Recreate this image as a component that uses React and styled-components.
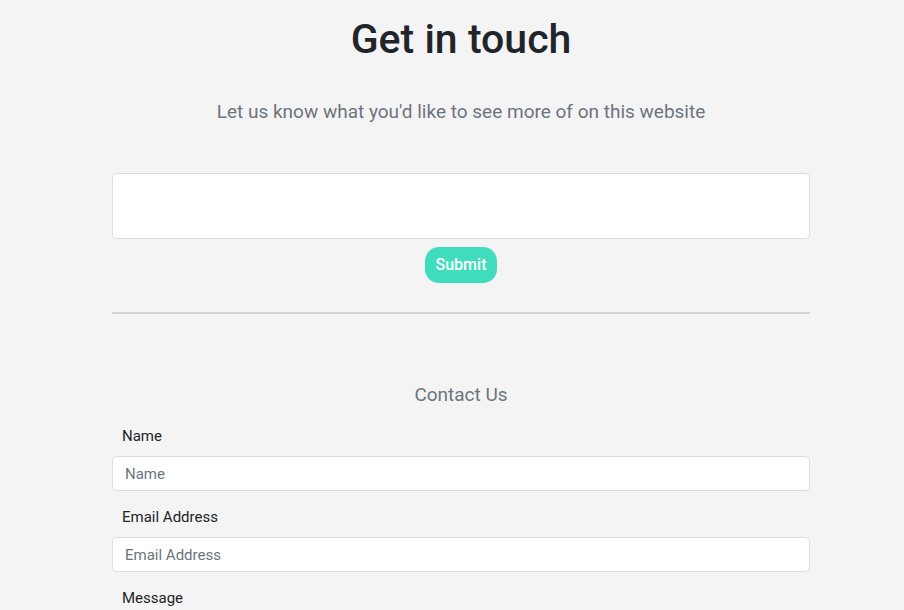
import React, { useState } from 'react'
import styled, { createGlobalStyle } from 'styled-components'

const GlobalStyle = createGlobalStyle`
  body {
    margin: 0;
    background: #f4f4f4;
    font-family: Roboto, "Liberation Sans", Arial, sans-serif;
    color: #212529;
  }
  * {
    box-sizing: border-box;
  }
`

export default function App() {
  const [idea, setIdea] = useState('')
  const [form, setForm] = useState({ name: '', email: '' })

  function handleField(e) {
    setForm({ ...form, [e.target.name]: e.target.value })
  }

  return (
    <>
      <GlobalStyle />
      <Page>
        <Title>Get in touch</Title>
        <Lead>Let us know what you'd like to see more of on this website</Lead>

        <IdeaForm onSubmit={(e) => { e.preventDefault(); setIdea('') }}>
          <IdeaBox value={idea} onChange={(e) => setIdea(e.target.value)} />
          <SubmitButton type='submit'>Submit</SubmitButton>
        </IdeaForm>

        <Divider />

        <SectionTitle>Contact Us</SectionTitle>
        <Field>
          <Label htmlFor='name'>Name</Label>
          <Input id='name' name='name' placeholder='Name' value={form.name} onChange={handleField} />
        </Field>
        <Field>
          <Label htmlFor='email'>Email Address</Label>
          <Input id='email' name='email' placeholder='Email Address' value={form.email} onChange={handleField} />
        </Field>
        <Field>
          <Label htmlFor='message'>Message</Label>
        </Field>
      </Page>
    </>
  )
}

const Page = styled.div`
  width: 698px;
  margin-left: 112px;
  padding-top: 15px;
  display: flex;
  flex-direction: column;
`

const Title = styled.h1`
  margin: 0;
  font-size: 41px;
  font-weight: 500;
  line-height: 1.2;
  text-align: center;
  color: #212529;
`

const Lead = styled.p`
  margin: 34px 0 0;
  font-size: 19px;
  line-height: 1.5;
  text-align: center;
  color: #6c757d;
`

const IdeaForm = styled.form`
  margin-top: 46px;
  display: flex;
  flex-direction: column;
  align-items: center;
  gap: 8px;
`

const IdeaBox = styled.textarea`
  width: 100%;
  height: 66px;
  display: block;
  border: 1px solid #d9dde2;
  border-radius: 5px;
  background: #fff;
  padding: 6px 12px;
  font: inherit;
  resize: none;
`

const SubmitButton = styled.button`
  width: 72px;
  height: 36px;
  border: none;
  border-radius: 14px;
  background: #40dcbe;
  color: #fff;
  font-family: inherit;
  font-size: 16px;
  font-weight: 500;
  cursor: pointer;
`

const Divider = styled.hr`
  width: 100%;
  margin: 29px 0 0;
  border: none;
  height: 2px;
  background: #d4d4d4;
`

const SectionTitle = styled.h2`
  margin: 67px 0 1px;
  font-size: 19px;
  font-weight: 400;
  line-height: 1.5;
  text-align: center;
  color: #6c757d;
`

const Field = styled.div`
  display: flex;
  flex-direction: column;
  margin-top: 14px;
`

const Label = styled.label`
  padding-left: 10px;
  margin-bottom: 8px;
  font-size: 15px;
  line-height: 24px;
  color: #212529;
`

const Input = styled.input`
  width: 100%;
  height: 35px;
  border: 1px solid #d9dde2;
  border-radius: 5px;
  background: #fff;
  padding: 0 12px;
  font-family: inherit;
  font-size: 15px;
  color: #212529;

  &::placeholder {
    color: #6c757d;
  }
`
